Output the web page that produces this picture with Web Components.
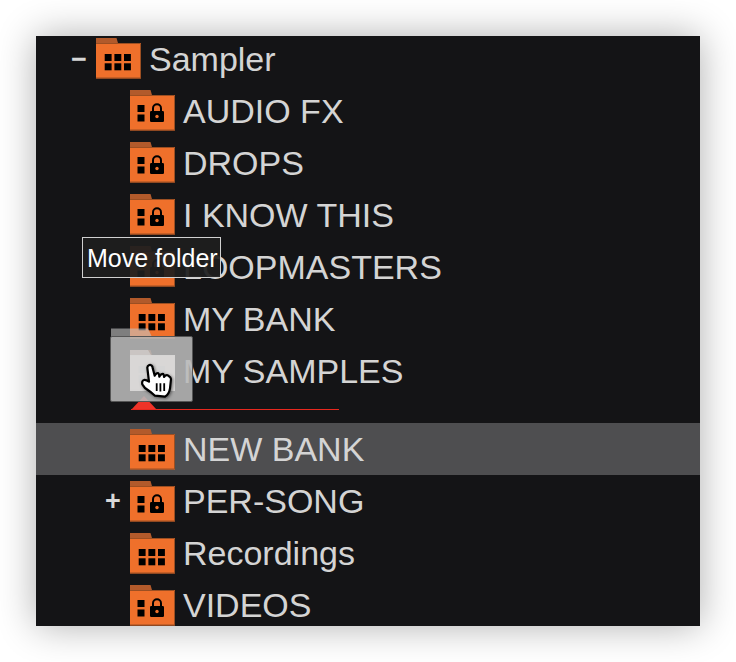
<!DOCTYPE html>
<html>
<head>
<meta charset="utf-8">
<style>
  html, body { margin: 0; background: #fff; }
  body { width: 736px; height: 662px; padding: 36px; box-sizing: border-box; overflow: hidden; }
</style>
</head>
<body>
<browser-pane>
  <folder-row depth="0" expander="minus" kind="grid">Sampler</folder-row>
  <folder-row kind="lock">AUDIO FX</folder-row>
  <folder-row kind="lock">DROPS</folder-row>
  <folder-row kind="lock">I KNOW THIS</folder-row>
  <folder-row kind="lock">LOOPMASTERS</folder-row>
  <folder-row kind="grid">MY BANK</folder-row>
  <folder-row kind="grid">MY SAMPLES</folder-row>
  <drop-line></drop-line>
  <folder-row kind="grid" selected low>NEW BANK</folder-row>
  <folder-row kind="lock" expander="plus" low>PER-SONG</folder-row>
  <folder-row kind="grid" low>Recordings</folder-row>
  <folder-row kind="lock" low>VIDEOS</folder-row>
  <drag-tip slot="over">Move folder</drag-tip>
  <drag-ghost slot="over"></drag-ghost>
</browser-pane>

<script>
// icone de dossier partagee
function folderSvg(kind) {
  let marks = '';
  if (kind === 'grid') {
    for (const y of [16, 25.3]) {
      for (const x of [8.7, 18.4, 28]) {
        marks += `<rect x="${x}" y="${y}" width="6.9" height="7" fill="#000"/>`;
      }
    }
  } else {
    marks = `
      <rect x="7.5" y="15" width="7" height="7" fill="#000"/>
      <rect x="7.5" y="24.5" width="7" height="7" fill="#000"/>
      <path d="M23 21.5v-3.2a4 4 0 0 1 8 0v3.2" fill="none" stroke="#000" stroke-width="2"/>
      <rect x="20" y="21" width="14" height="11" rx="1.2" fill="#000"/>
      <circle cx="27" cy="26.5" r="1.7" fill="#ef702b"/>`;
  }
  return `<svg width="45" height="42" viewBox="0 0 45 42">
    <path d="M0 0H20.5L22 5H0Z" fill="#b25a2b"/>
    <rect x="0" y="5" width="45" height="35.5" fill="#ef702b"/>
    <path d="M0 5.5H44.5V40H0" fill="none" stroke="#9c4f22" stroke-width="1"/>
    ${marks}
  </svg>`;
}

class BrowserPane extends HTMLElement {
  constructor() {
    super();
    this.attachShadow({ mode: 'open' });
    this.shadowRoot.innerHTML = `
      <style>
        :host {
          display: block;
          position: relative;
          width: 664px;
          height: 590px;
          background: #141416;
          overflow: hidden;
          box-shadow: 0 0 36px rgba(0, 0, 0, 0.32);
          font-family: "Liberation Sans", Arial, sans-serif;
        }
        .list { display: flex; flex-direction: column; margin-top: -3px; }
      </style>
      <div class="list"><slot></slot></div>
      <slot name="over"></slot>
    `;
  }
}

class FolderRow extends HTMLElement {
  constructor() {
    super();
    this.attachShadow({ mode: 'open' });
    const top = this.getAttribute('depth') === '0';
    const exp = this.getAttribute('expander');
    const sign = exp === 'minus' ? '\u2212' : exp === 'plus' ? '+' : '';
    this.shadowRoot.innerHTML = `
      <style>
        :host {
          display: flex;
          align-items: center;
          flex: none;
          height: 52px;
          padding-left: ${top ? 60 : 94}px;
          color: #d4d4d4;
          font-size: 34px;
          line-height: 52px;
        }
        :host([selected]) { background: #4e4e50; }
        .exp {
          width: 24px;
          margin-left: -29px;
          margin-right: 5px;
          text-align: center;
          font-size: 27px;
          font-weight: bold;
          color: #d8d8d8;
        }
        .icon { display: flex; width: 45px; height: 42px; }
        :host([low]) .icon { margin-top: 2px; }
        .name { margin-left: 8px; white-space: nowrap; }
      </style>
      <span class="exp">${sign}</span>
      <span class="icon">${folderSvg(this.getAttribute('kind'))}</span>
      <span class="name"><slot></slot></span>
    `;
  }
}

class DropLine extends HTMLElement {
  constructor() {
    super();
    this.attachShadow({ mode: 'open' });
    this.shadowRoot.innerHTML = `
      <style>
        :host { display: block; flex: none; height: 26px; position: relative; }
        .line { position: absolute; left: 95px; top: 12px; width: 208px; height: 1px; background: #e8281e; }
        .tri {
          position: absolute; left: 95px; top: -1px;
          width: 0; height: 0;
          border-left: 13px solid transparent;
          border-right: 13px solid transparent;
          border-bottom: 14px solid #ee3328;
        }
      </style>
      <div class="tri"></div>
      <div class="line"></div>
    `;
  }
}

class DragTip extends HTMLElement {
  constructor() {
    super();
    this.attachShadow({ mode: 'open' });
    this.shadowRoot.innerHTML = `
      <style>
        :host {
          position: absolute;
          left: 46px;
          top: 201px;
          box-sizing: border-box;
          width: 139px;
          height: 41px;
          border: 1px solid #d0d0d0;
          background: rgba(30, 30, 30, 0.93);
          color: #fff;
          font-size: 25px;
          line-height: 41px;
          padding-left: 4px;
          white-space: nowrap;
        }
      </style>
      <slot></slot>
    `;
  }
}

class DragGhost extends HTMLElement {
  constructor() {
    super();
    this.attachShadow({ mode: 'open' });
    this.shadowRoot.innerHTML = `
      <style>
        :host {
          position: absolute;
          left: 74px;
          top: 291px;
          width: 84px;
          height: 76px;
          display: block;
        }
        svg { display: block; position: absolute; left: 0; top: 0; overflow: visible; }
        .hand { filter: drop-shadow(1px 1px 1.5px rgba(0, 0, 0, 0.5)); }
      </style>
      <svg width="84" height="76" viewBox="0 0 84 76">
        <path d="M1 1.5H38L42 10H1Z" fill="#c4c4c4" fill-opacity="0.6"/>
        <rect x="0.5" y="9.5" width="82" height="65" rx="1.5" fill="#bababa" fill-opacity="0.88" stroke="#555" stroke-width="1"/>
        <path d="M20 23H38L41 28H20Z" fill="#d8d8d8" fill-opacity="0.55"/>
        <rect x="20" y="28" width="45" height="36" fill="#dcdcdc" fill-opacity="0.88"/>
        <g class="hand">
          <path d="M39 54.7L37.3 40.7C37.5 38 40 37.3 41.5 38.5C42.3 39 42.7 40.2 42.7 41.3L44.7 48.7C45.5 46.5 47.5 45.8 48.3 46.3C49 46.8 49.3 48 49.3 49.7C50.5 47.3 52.5 46.5 53.3 47C54 47.6 54 49 54 50C55.5 48.2 57.3 48 58.3 48.7C60 49.6 61 50.5 61 52L60 61.3C59.5 65 57.5 68 55 69.7L45 68.7C42 66 38 63 35 61L32.3 57.3C31.8 55 32.5 53.3 34 53C35.5 52.8 37 53.3 39 54.7Z" fill="#fff" stroke="#000" stroke-width="2.2" stroke-linejoin="round"/>
          <path d="M46.7 56.3V64M50.4 56.3V64.5M54.2 56.3V64" stroke="#000" stroke-width="1.8"/>
        </g>
      </svg>
    `;
  }
}

customElements.define('browser-pane', BrowserPane);
customElements.define('folder-row', FolderRow);
customElements.define('drop-line', DropLine);
customElements.define('drag-tip', DragTip);
customElements.define('drag-ghost', DragGhost);
</script>
</body>
</html>
